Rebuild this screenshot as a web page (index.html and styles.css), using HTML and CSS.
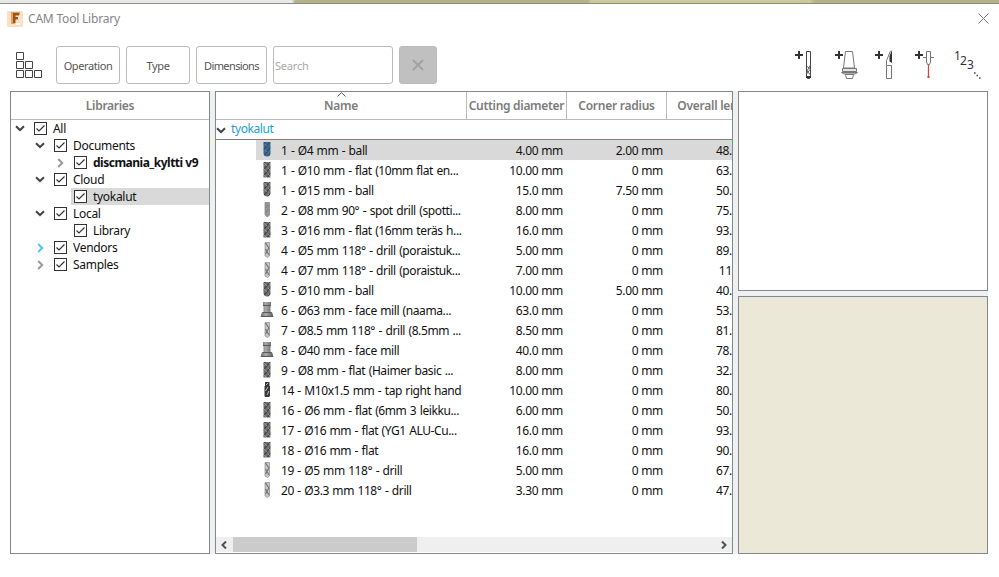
FILE: index.html
```html
<!DOCTYPE html>
<html lang="en">
<head>
    <meta charset="UTF-8">
    <title>CAM Tool Library</title>
    <link rel="stylesheet" href="styles.css">
</head>
<body>
    <!-- shared icons -->
    <svg class="defs" width="0" height="0">
        <defs>
            <pattern id="flutes" width="5" height="6" patternUnits="userSpaceOnUse">
                <rect width="5" height="6" fill="#707070"/>
                <path d="M0 6L5 0M-1 1L1 -1M4 7L6 5" stroke="#444" stroke-width="1.4"/>
                <path d="M0 2L2 4M3 0L5 2" stroke="#a0a0a0" stroke-width=".8"/>
            </pattern>
            <pattern id="flutes-blue" width="5" height="6" patternUnits="userSpaceOnUse">
                <rect width="5" height="6" fill="#42678c"/>
                <path d="M0 6L5 0M-1 1L1 -1M4 7L6 5" stroke="#2d5075" stroke-width="1.4"/>
                <path d="M0 2L2 4" stroke="#6486a8" stroke-width=".8"/>
            </pattern>
            <linearGradient id="steel">
                <stop offset="0" stop-color="#5c5c5c"/>
                <stop offset=".4" stop-color="#aaa"/>
                <stop offset="1" stop-color="#5a5a5a"/>
            </linearGradient>
        </defs>
        <symbol id="down" viewBox="0 0 10 7"><path d="M1 1.2L5 5L9 1.2" fill="none" stroke="currentColor" stroke-width="2"/></symbol>
        <symbol id="right" viewBox="0 0 7 10"><path d="M1.2 1L5.2 5L1.2 9" fill="none" stroke="currentColor" stroke-width="2"/></symbol>
        <symbol id="check" viewBox="0 0 13 13"><rect x=".5" y=".5" width="12" height="12" fill="#fff" stroke="#333"/><path d="M2.5 6.5L5 9L10.5 3.5" fill="none" stroke="#333" stroke-width="1.2"/></symbol>
        <symbol id="flat" viewBox="0 0 14 16"><rect x="3.5" y="0" width="7" height="15.5" fill="url(#flutes)"/></symbol>
        <symbol id="ball" viewBox="0 0 14 16"><path d="M3.5 0H10.5V11Q10.5 14.5 7 14.5Q3.5 14.5 3.5 11Z" fill="url(#flutes)"/></symbol>
        <symbol id="ballblue" viewBox="0 0 14 16"><path d="M3.5 0H10.5V11Q10.5 14.5 7 14.5Q3.5 14.5 3.5 11Z" fill="url(#flutes-blue)"/></symbol>
        <symbol id="spot" viewBox="0 0 14 16"><path d="M5 .5H9.5V13L7.5 15L5 13Z" fill="#969696" stroke="#808080" stroke-width=".7"/><path d="M5.5 6L8.5 3M5.5 11L8.5 7" stroke="#7c7c7c"/></symbol>
        <symbol id="drill" viewBox="0 0 14 16"><path d="M5 .5H9.5V14L7.5 15.5L5 14Z" fill="#c6c6c6" stroke="#808080" stroke-width=".6"/><path d="M5.5 1L9 6M9 6L5.5 12M5.5 7L9 13" fill="none" stroke="#707070" stroke-width="1.1"/></symbol>
        <symbol id="tap" viewBox="0 0 14 16"><path d="M5 0H9.5V4H10V14L9 15H5L4.5 14V4H5Z" fill="#383838"/><path d="M5.5 9L8 5M7 13L9 9M6 3L8 1" stroke="#bbb"/></symbol>
        <symbol id="face" viewBox="0 0 14 16"><path d="M3 0H11V4H10.5V10H12L13.5 15H.5L2 10H3.5V4H3Z" fill="url(#steel)"/><path d="M3 3.5H11M3 10.5H11M1 14.5H13" stroke="#5a5a5a"/></symbol>
    </svg>

    <div class="backdrop"></div>
    <div class="window">
        <div class="title-bar">
            <svg class="app-icon" width="16" height="16" viewBox="0 0 16 16">
                <rect width="16" height="16" rx="1" fill="#fbe0c8"/>
                <path d="M4 1H13V4H8V6H11V9H8V13H4Z" fill="#e9a05a"/>
                <path d="M6 2H12V4.5H8.5V6H11V8H8.5V12H6Z" fill="#96571f"/>
                <path d="M9 13H13" stroke="#fff" stroke-width="2"/>
            </svg>
            <span class="title">CAM Tool Library</span>
            <svg class="close" width="11" height="11" viewBox="0 0 11 11"><path d="M.5 .5L10.5 10.5M10.5 .5L.5 10.5" stroke="#777"/></svg>
        </div>

        <div class="toolbar">
            <svg class="grid-icon" width="26" height="26" viewBox="0 0 26 26" fill="none" stroke="#444">
                <path d="M.5 .5h7v7h-7zM.5 9.5h7v7h-7zM9.5 9.5h7v7h-7zM.5 18.5h7v7h-7zM9.5 18.5h7v7h-7zM18.5 18.5h7v7h-7z"/>
            </svg>
            <div class="button operation">Operation</div>
            <div class="button">Type</div>
            <div class="button dimensions">Dimensions</div>
            <div class="search">Search</div>
            <div class="clear">
                <svg width="12" height="12" viewBox="0 0 12 12"><path d="M1 1L11 11M11 1L1 11" stroke="#a2a2a2" stroke-width="2"/></svg>
            </div>
            <svg class="tool-icons" width="186" height="38" viewBox="0 -3 186 38" fill="none">
                <g stroke="#333" stroke-width="2">
                    <path d="M4 2V10M0 6H8M44 2V10M40 6H48M84 2V10M80 6H88M124 2V10M120 6H128"/>
                </g>
                <!-- mill -->
                <path d="M11.5 2.5H15.5V28L14.5 29.5H12.5L11.5 28Z" stroke="#444"/>
                <path d="M11.5 17L15.5 20L11.5 25M15.5 16L12 22L15.5 26" stroke="#666"/>
                <path d="M11 28H16" stroke="#333" stroke-width="2"/>
                <!-- holder -->
                <path d="M50.5 2.5H57.5L59.5 19H48.5Z" fill="#fff" stroke="#777"/>
                <path d="M47.5 19.5H61.5V22.5H47.5ZM46.5 23.5H62.5L60 25H49Z" fill="#e5e5e5" stroke="#777"/>
                <path d="M50.5 25.5H58.5L57.5 29.5H51.5Z" stroke="#777"/>
                <!-- turning tool -->
                <path d="M91.5 16.5H96.5V29.5H91.5ZM91.5 16V11.5L95.5 2" stroke="#777"/>
                <path d="M97 1V14L94.5 12.5V7Z" fill="#333"/>
                <!-- probe -->
                <path d="M131.5 2.5H135.5V13L134.5 15.5H132.5L131.5 13ZM128 8.5H131M136 8.5H139" stroke="#777"/>
                <path d="M133.5 16V29" stroke="#c54e3c" stroke-width="1.3"/>
                <rect x="132.5" y="27" width="2" height="2" fill="#c54e3c"/>
                <g class="digits" fill="#333">
                    <text x="159" y="11">1</text>
                    <text x="165" y="16">2</text>
                    <text x="172" y="20">3</text>
                </g>
                <path d="M179 24h1.5M181.5 26.5h1.5M184 29h1.5" stroke="#444" stroke-width="1.3"/>
            </svg>
        </div>

        <div class="panels">
            <div class="panel libraries">
                <div class="panel-header">Libraries</div>
                <div class="tree" id="tree"></div>
            </div>
            <div class="panel tools">
                <div class="columns">
                    <div class="column name">Name
                        <svg class="sort" width="9" height="5" viewBox="0 0 9 5"><path d="M.5 4.5L4.5 .7L8.5 4.5" fill="none" stroke="#555"/></svg>
                    </div>
                    <div class="column diameter">Cutting diameter</div>
                    <div class="column">Corner radius</div>
                    <div class="column last">Overall length</div>
                </div>
                <div class="group">
                    <svg width="10" height="7"><use href="#down"/></svg>
                    <span>tyokalut</span>
                </div>
                <div class="rows" id="rows"></div>
                <div class="scrollbar">
                    <svg class="arrow" width="6" height="8" viewBox="0 0 6 8"><path d="M5 .5L1.5 4L5 7.5" fill="none" stroke="#505050" stroke-width="2"/></svg>
                    <div class="track"><div class="thumb"></div></div>
                    <svg class="arrow" width="6" height="8" viewBox="0 0 6 8"><path d="M1 .5L4.5 4L1 7.5" fill="none" stroke="#505050" stroke-width="2"/></svg>
                </div>
            </div>
            <div class="side">
                <div class="panel info"></div>
                <div class="panel preview"></div>
            </div>
        </div>
    </div>

    <script>
        // level, arrow, label, extra class
        const libraries = [
            [0, "down", "All", ""],
            [1, "down", "Documents", ""],
            [2, "right", "discmania_kyltti v9", "bold"],
            [1, "down", "Cloud", ""],
            [2, "", "tyokalut", "selected"],
            [1, "down", "Local", ""],
            [2, "", "Library", ""],
            [1, "right", "Vendors", "active"],
            [1, "right", "Samples", ""]
        ];

        // icon, name, cutting diameter, corner radius, overall length
        const tools = [
            ["ballblue", "1 - Ø4 mm - ball", "4.00 mm", "2.00 mm", "48."],
            ["flat", "1 - Ø10 mm - flat (10mm flat en...", "10.00 mm", "0 mm", "63."],
            ["ball", "1 - Ø15 mm - ball", "15.0 mm", "7.50 mm", "50."],
            ["spot", "2 - Ø8 mm 90° - spot drill (spotti...", "8.00 mm", "0 mm", "75."],
            ["flat", "3 - Ø16 mm - flat (16mm teräs h...", "16.0 mm", "0 mm", "93."],
            ["drill", "4 - Ø5 mm 118° - drill (poraistuk...", "5.00 mm", "0 mm", "89."],
            ["drill", "4 - Ø7 mm 118° - drill (poraistuk...", "7.00 mm", "0 mm", "11"],
            ["ball", "5 - Ø10 mm - ball", "10.00 mm", "5.00 mm", "40."],
            ["face", "6 - Ø63 mm - face mill (naama...", "63.0 mm", "0 mm", "53."],
            ["drill", "7 - Ø8.5 mm 118° - drill (8.5mm ...", "8.50 mm", "0 mm", "81."],
            ["face", "8 - Ø40 mm - face mill", "40.0 mm", "0 mm", "78."],
            ["flat", "9 - Ø8 mm - flat (Haimer basic ...", "8.00 mm", "0 mm", "32."],
            ["tap", "14 - M10x1.5 mm - tap right hand", "10.00 mm", "0 mm", "80."],
            ["flat", "16 - Ø6 mm - flat (6mm 3 leikku...", "6.00 mm", "0 mm", "50."],
            ["flat", "17 - Ø16 mm - flat (YG1 ALU-Cu...", "16.0 mm", "0 mm", "93."],
            ["flat", "18 - Ø16 mm - flat", "16.0 mm", "0 mm", "90."],
            ["drill", "19 - Ø5 mm 118° - drill", "5.00 mm", "0 mm", "67."],
            ["drill", "20 - Ø3.3 mm 118° - drill", "3.30 mm", "0 mm", "47."]
        ];

        document.getElementById("tree").innerHTML = libraries.map(([level, arrow, label, cls]) => `
            <div class="node level${level} ${cls}">
                <span class="expander ${arrow}">${arrow ? `<svg><use href="#${arrow}"/></svg>` : ""}</span>
                <div class="node-body">
                    <svg class="checkbox"><use href="#check"/></svg>
                    <span>${label}</span>
                </div>
            </div>`).join("");

        document.getElementById("rows").innerHTML = tools.map(([icon, name, diameter, radius, length], i) => `
            <div class="row ${i === 0 ? "selected" : ""}">
                <div class="tool-name">
                    <svg class="tool-icon"><use href="#${icon}"/></svg>
                    <span>${name}</span>
                </div>
                <div class="value">${diameter}</div>
                <div class="value">${radius}</div>
                <div class="value length">${length}</div>
            </div>`).join("");
    </script>
</body>
</html>
```

FILE: styles.css
```css
body, html {
    margin: 0;
    padding: 0;
    height: 577px;
    overflow: hidden;
    background-color: #fff;
    color: #111;
    font-family: "Noto Sans", "Open Sans", sans-serif;
    font-size: 12px;
    letter-spacing: -0.2px;
    box-sizing: border-box;
    white-space: nowrap;
}

svg {
    display: block;
    flex: none;
}

.defs {
    position: absolute;
}

.backdrop {
    height: 3px;
    background: linear-gradient(90deg, #e9e9e9 292px, #b5b38f 295px, #b5b38f 588px, #c9c99c 591px, #c9c99c 810px, #b5b38f 814px);
}

.window {
    height: 573px;
    border-top: 1px solid #8d8d88;
    background-color: #fff;
}

.title-bar {
    display: flex;
    align-items: center;
    height: 29px;
    padding: 0 10px 0 7px;
}

.title {
    flex: 1;
    margin-left: 5px;
    color: #858585;
}

.toolbar {
    display: flex;
    align-items: center;
    height: 38px;
    padding: 13px 18px 7px 16px;
}

.grid-icon {
    margin-right: 14px;
}

.button, .search, .clear {
    display: flex;
    align-items: center;
    justify-content: center;
    box-sizing: border-box;
    width: 64px;
    height: 38px;
    margin-right: 6px;
    padding-top: 1px;
    border: 1px solid #bbb;
    border-radius: 3px;
    color: #555;
    font-size: 11px;
    letter-spacing: -0.4px;
}

.dimensions {
    width: 71px;
    letter-spacing: -0.6px;
}

.search {
    width: 120px;
    justify-content: flex-start;
    padding-left: 1px;
    color: #aaa;
    letter-spacing: -0.2px;
}

.clear {
    width: 38px;
    margin-right: 0;
    padding-top: 0;
    background-color: #c0c0c0;
}

.tool-icons {
    margin-left: auto;
}

.digits {
    font-size: 12px;
}

.panels {
    display: flex;
    gap: 5px;
    width: 978px;
    height: 463px;
    margin-left: 10px;
    background-color: #eff0f2;
}

.panel {
    box-sizing: border-box;
    border: 1px solid #858889;
    background-color: #fff;
    overflow: hidden;
}

.libraries {
    width: 200px;
}

.panel-header, .columns {
    height: 27px;
    border-bottom: 1px solid #bbb;
    line-height: 27px;
    text-align: center;
    font-weight: 600;
    color: #7c7c7c;
}

.panel-header {
    letter-spacing: -0.3px;
}

.node {
    display: flex;
    align-items: center;
    height: 17px;
}

.level0 { padding-left: 4px; }
.level1 { padding-left: 24px; }
.level2 { padding-left: 44px; }

.expander {
    width: 16px;
    color: #444;
}

.expander.down svg {
    width: 10px;
    height: 7px;
}

.expander.right svg {
    width: 7px;
    height: 10px;
    margin-left: 2px;
    color: #999;
}

.active .expander.right svg {
    color: #55c3e8;
}

.node-body {
    display: flex;
    align-items: center;
    flex: 1;
    height: 17px;
    padding-left: 3px;
    letter-spacing: -0.3px;
}

.selected .node-body {
    background-color: #d9d9d9;
}

.checkbox {
    width: 13px;
    height: 13px;
    margin-right: 6px;
}

.bold .node-body {
    font-weight: bold;
    letter-spacing: -0.5px;
}

.tools {
    display: flex;
    flex-direction: column;
    width: 518px;
}

.columns {
    display: flex;
    flex: none;
}

.column {
    flex: none;
    box-sizing: border-box;
    width: 100px;
    border-right: 1px solid #bbb;
    letter-spacing: -0.25px;
}

.column.name {
    position: relative;
    width: 251px;
}

.column.diameter {
    letter-spacing: -0.3px;
}

.column.last {
    border-right: none;
}

.sort {
    position: absolute;
    top: 0;
    left: 121px;
}

.group {
    display: flex;
    align-items: center;
    height: 19px;
    border-bottom: 1px solid #3a98b3;
    color: #1f9fcd;
}

.group svg {
    color: #444;
    margin-top: 2px;
}

.group span {
    margin: -2px 0 0 5px;
    letter-spacing: -0.4px;
}

.rows {
    flex: 1;
}

.row {
    display: flex;
    width: 551px;
    height: 20px;
    line-height: 22px;
}

.tool-name {
    display: flex;
    align-items: flex-start;
    box-sizing: border-box;
    width: 210px;
    height: 20px;
    margin-left: 40px;
    padding-left: 4px;
    letter-spacing: -0.4px;
    word-spacing: 0.7px;
}

.tool-icon {
    width: 14px;
    height: 16px;
    margin: 2px 7px 0 0;
}

.value {
    box-sizing: border-box;
    width: 100px;
    height: 20px;
    padding-right: 3px;
    text-align: right;
    letter-spacing: -0.3px;
}

/* only the part left of the panel edge is filled in */
.value.length {
    width: 66px;
    padding-right: 0;
}

.row.selected .tool-name, .row.selected .value {
    background-color: #d9d9d9;
}

.scrollbar {
    display: flex;
    align-items: center;
    height: 15px;
    margin-bottom: 1px;
    padding: 0 5px;
    background-color: #efefef;
}

.track {
    flex: 1;
    height: 15px;
    margin: 0 6px;
}

.thumb {
    width: 184px;
    height: 15px;
    background-color: #cbcbcb;
}

.side {
    display: flex;
    flex-direction: column;
    gap: 5px;
    width: 250px;
}

.info {
    height: 200px;
}

.preview {
    flex: 1;
    background-color: #ebe8d8;
}
```
